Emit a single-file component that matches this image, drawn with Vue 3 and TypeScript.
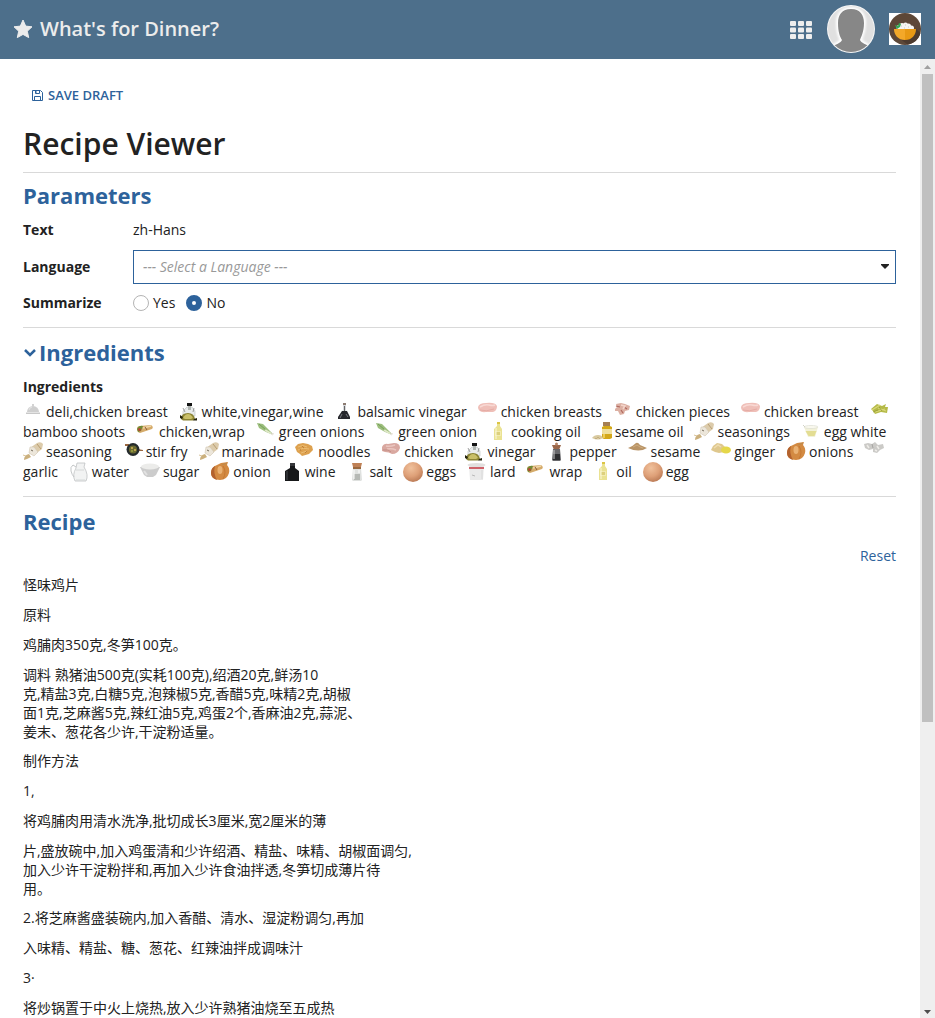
<script setup lang="ts">
import { ref } from 'vue'

interface Ingredient {
  name: string
  icon: string
}

const language = ref('')
const summarize = ref('no')
const open = ref(true)

const ingredients: Ingredient[] = [
  { name: 'deli,chicken breast', icon: 'deli' },
  { name: 'white,vinegar,wine', icon: 'vinegar' },
  { name: 'balsamic vinegar', icon: 'balsamic' },
  { name: 'chicken breasts', icon: 'breast' },
  { name: 'chicken pieces', icon: 'pieces' },
  { name: 'chicken breast', icon: 'breast' },
  { name: 'bamboo shoots', icon: 'bamboo' },
  { name: 'chicken,wrap', icon: 'wrap' },
  { name: 'green onions', icon: 'scallion' },
  { name: 'green onion', icon: 'scallion' },
  { name: 'cooking oil', icon: 'oil' },
  { name: 'sesame oil', icon: 'sesameoil' },
  { name: 'seasonings', icon: 'seasoning' },
  { name: 'egg white', icon: 'eggwhite' },
  { name: 'seasoning', icon: 'seasoning' },
  { name: 'stir fry', icon: 'stirfry' },
  { name: 'marinade', icon: 'seasoning' },
  { name: 'noodles', icon: 'noodles' },
  { name: 'chicken', icon: 'chicken' },
  { name: 'vinegar', icon: 'vinegar' },
  { name: 'pepper', icon: 'pepper' },
  { name: 'sesame', icon: 'sesame' },
  { name: 'ginger', icon: 'ginger' },
  { name: 'onions', icon: 'onion' },
  { name: 'garlic', icon: 'garlic' },
  { name: 'water', icon: 'water' },
  { name: 'sugar', icon: 'sugar' },
  { name: 'onion', icon: 'onion' },
  { name: 'wine', icon: 'wine' },
  { name: 'salt', icon: 'salt' },
  { name: 'eggs', icon: 'egg' },
  { name: 'lard', icon: 'lard' },
  { name: 'wrap', icon: 'wrap' },
  { name: 'oil', icon: 'oil' },
  { name: 'egg', icon: 'egg' },
]

const art: Record<string, string> = {
  deli: '<path d="M4 10a6 6 0 0 1 12 0z" fill="#cfcfcf"/><circle cx="10" cy="3" r="1" fill="#c4c4c4"/><path d="M3 10.500h14v1.500H3z" fill="#c8c8c8"/><path d="M6 8a4 4 0 0 1 3-3" stroke="#e6e6e6" fill="none"/>',
  vinegar: '<path d="M8 5L4 9v5h12V9l-3-4z" fill="#e9ecec" stroke="#b9c0be" stroke-width=".6"/><path d="M8 1h5v3H8z" fill="#151515"/><path d="M9 4h3v4H9z" fill="#b0b5b2"/><path d="M4 6l2 4M15 6l-1 4" stroke="#777" stroke-width=".7"/><path d="M2 17q0-6 7-6 6 0 7 6l-2 1.500H4z" fill="#8b8433"/><path d="M4 16q2-4 5-4t5 4l-2 1H6z" fill="#c9bf68"/><path d="M1 13l3 2-1 2-2-1zM15 17l3-1v2.500h-4z" fill="#25240f"/>',
  balsamic: '<path d="M9 3h3v5l4 7v2H4v-2l5-7z" fill="#d7d9dc"/><path d="M9 1h3v2H9z" fill="#8c7c72"/><path d="M8 9h5l3 6v2H4v-2z" fill="#26272c"/><path d="M10.500 4v5" stroke="#666"/><path d="M8 12l-2 4M12 12l2 3" stroke="#8b8f96" stroke-width=".8"/>',
  breast: '<path d="M0 5q1-4 8-4 9-1 11 3 0 5-4 6H8Q0 11 0 5z" fill="#efbfb8"/><path d="M2 5q5-3 9-2t6 0" stroke="#f8d9d4" stroke-width="1.500" fill="none"/><path d="M2 8q6 2 14-1" stroke="#e2a69f" fill="none" stroke-width=".8"/>',
  pieces: '<path d="M3 2l5-1 4 1 5 2-1 4-4 1-1 3-4 1-2-4-3 0 0-2 2-2z" fill="#dcb0a3"/><path d="M3 4l4 1M11 5l3 2M8 8l2 3" stroke="#b0675c" stroke-width="1.200"/><path d="M8 3l4 1-2 3" stroke="#f3d5cb" stroke-width="1.500" fill="none"/>',
  bamboo: '<path d="M2 7l6-5 5 2 4-2-1 3h3l-1 6-6-1-6 2-2-3z" fill="#b5ba48"/><path d="M3 8l8-5M6 10l10-3M9 6l8 3" stroke="#d9d878" stroke-width="1.200"/><path d="M4 10l5-2M10 5l3 4" stroke="#949a33" stroke-width=".8"/>',
  wrap: '<path d="M1 7q0-3 3-3l11-1q3 2 1 4L4 11q-3-1-3-4z" fill="#d5ab6b"/><path d="M1 7q2-4 6-3l-2 5-3 1z" fill="#6f8b36"/><circle cx="3.500" cy="7.500" r="1.500" fill="#b94531"/><path d="M7 6l8-2" stroke="#f1d7a8" stroke-width="1.500"/><path d="M9 5l2 3" stroke="#8b5934"/>',
  scallion: '<path d="M1 1l6 1 5 5 4 4-1 1-5-2-7-4z" fill="#9cbe7c"/><path d="M3 2l7 6" stroke="#6b9450" stroke-width=".8"/><path d="M9 8l6 3.500" stroke="#dfe8c8" stroke-width="2"/><path d="M15 11l3 1M15 12l2 1" stroke="#cec8b3" stroke-width=".6"/>',
  oil: '<path d="M9 1h3v3l2 3v11H6V7l3-3z" fill="#eae292"/><path d="M9 0h3v2H9z" fill="#dcc544"/><path d="M7 9h6v5H7z" fill="#f2ebb0"/><path d="M8 10h4v3H8z" fill="#ddd07c"/><path d="M8 6v11" stroke="#faf7d9"/>',
  sesameoil: '<path d="M10 5l2-1h6l2 1v11l-2 1h-6l-2-1z" fill="#d3a719"/><path d="M11 0h7v4h-7z" fill="#a57f54"/><path d="M10 7h10v5H10z" fill="#efdf9c"/><path d="M12 12v4" stroke="#edcb53" stroke-width="2"/><path d="M0 16q2-3 6-3 4 0 5 3-5 3-11 0z" fill="#d8c99f"/><path d="M3 16l1 1 2-2 2 2" stroke="#b69c6b" fill="none" stroke-width=".6"/>',
  seasoning: '<path d="M7 6L14 1q4-2 6 1l-1 5-8 6z" fill="#dccbab"/><path d="M7 5l4 0 4 5-4 4-5-3z" fill="#ece6da" stroke="#cbbfa8" stroke-width=".5"/><path d="M14 2l4 5" stroke="#b89d70"/><path d="M8 8l2 1" stroke="#776e5e"/><path d="M1 18q0-5 5-6l2 3-4 2z" fill="#cbb07d"/><path d="M0 13l3 1" stroke="#d9c49b"/>',
  eggwhite: '<path d="M3 5h14l-3 10H7z" fill="#f2f1d8"/><path d="M4.500 9h11l-2 5h-6z" fill="#e3dd93"/><ellipse cx="10" cy="5" rx="7" ry="1.500" fill="#faf9ef" stroke="#dcded2" stroke-width=".7"/><path d="M2 3l2 2" stroke="#d2d3c6"/>',
  stirfry: '<path d="M15 7l5 1v1h-5zM2 2h4v2H2z" fill="#9a6740"/><circle cx="10" cy="7.500" r="6.500" fill="#252b2c"/><circle cx="10" cy="7.500" r="4" fill="#6b6b31"/><circle cx="9" cy="6" r="1" fill="#d6b45a"/><circle cx="12" cy="8" r="1" fill="#d6b45a"/><circle cx="9" cy="9" r="1" fill="#9ca440"/>',
  noodles: '<path d="M0 5l3-3 5-1 5 1 4 2 1 4-4 4-7 2-2-2-3-2z" fill="#dda14f"/><path d="M3 5q5-3 9 0M3 8q5-3 11-1M6 11l6-2" fill="none" stroke="#efc47c" stroke-width=".8"/><path d="M7 4l2 2M12 9l-2 2M5 7l1 2" stroke="#b87831" stroke-width=".8"/>',
  chicken: '<path d="M1 5q2-4 6-3l6-1q6 0 6 5-2 6-8 6-3-2-7-2L1 9z" fill="#d9a8a0"/><path d="M5 4q4 1 9-1M6 7q5-1 9 1" stroke="#eac6bf" fill="none" stroke-width="1.500"/><path d="M2 8l5 0 3 2" stroke="#bd857e" fill="none" stroke-width=".8"/>',
  pepper: '<path d="M6 3h9l-2 5H8z" fill="#9b684b"/><circle cx="10.500" cy="2" r="1.500" fill="#b88465"/><path d="M7 7h7l1 11-1 1H7l-1-1z" fill="#68686b"/><path d="M7 12h7v6H7z" fill="#2d2e30"/><path d="M8 8v9" stroke="#c9c9ca"/>',
  sesame: '<path d="M0 6q4-1 8-5 2-1 4 2l7 3q-8 5-19 0z" fill="#b99467"/><path d="M5 5l4-2 3 2 3 1" stroke="#d0ae80" fill="none"/>',
  ginger: '<path d="M0 8l2-4 4-3 5 1 4 4-2 4-5 1-4-1z" fill="#dfc88e"/><ellipse cx="15" cy="8" rx="5" ry="3.500" fill="#e5d74a"/><path d="M3 6l4-3 3 2" stroke="#eedcb0" fill="none" stroke-width="1.500"/>',
  onion: '<path d="M1 11q0-6 6-8l4-2 7-1-1 3q3 3 2 8-2 7-9 7-9 0-9-7z" fill="#d38a42"/><path d="M1 11q0-5 4-7-2 7 2 14-6-2-6-7z" fill="#b3622e"/><path d="M13 4q4 6 0 13" fill="none" stroke="#c1742f" stroke-width=".8"/><path d="M12 3l5-2" stroke="#b98a50"/><ellipse cx="10" cy="8" rx="2.500" ry="4" fill="#eab274"/>',
  garlic: '<path d="M0 2l4-1 4 1 3-2 3 3 5-1 1 4-4 2-3 3-4-1 0-3-4 1-4-2z" fill="#cbcac7"/><path d="M3 3l2 3M13 4l2 3M11 8l2 1" stroke="#eeece8" stroke-width="1.500"/><path d="M8 2l1 4" stroke="#a5a4a1"/>',
  water: '<path d="M8 1h8l-1 4q5 8 2 14H6Q3 13 7 6z" fill="#f2f3f3" stroke="#bfc2c3" stroke-width=".8"/><path d="M7 5L4 3Q1 5 2 9t3 6" fill="none" stroke="#c3c6c7"/><path d="M7 8h8M7 18h9" stroke="#d5d8d8"/>',
  sugar: '<path d="M0 5h20l-4 8-3 2H7l-3-2z" fill="#cccccc"/><ellipse cx="10" cy="4.500" rx="9" ry="3" fill="#ececea"/><path d="M4 9l3 4" stroke="#e2e2e2" stroke-width="2"/>',
  wine: '<path d="M8 1h5v5l4 3v10H3V9l5-3z" fill="#17181a"/><path d="M8 1h5v3H8z" fill="#36373a"/><path d="M5 9v9" stroke="#44464c"/>',
  salt: '<path d="M7 6h8l1 12-1 1H7l-1-1z" fill="#dfe1df"/><path d="M6 1h10l-1 4H7z" fill="#bf8156"/><path d="M7 5h8v2H7z" fill="#99683f"/><path d="M8 12h6v6H8z" fill="#b6b9b5"/><path d="M8 8v9M13 8v3" stroke="#fff"/>',
  egg: '<defs><radialGradient id="shell" cx=".4" cy=".3" r=".7"><stop offset="0" stop-color="#f0c19c"/><stop offset=".6" stop-color="#dea078"/><stop offset="1" stop-color="#bd7d58"/></radialGradient></defs><circle cx="10" cy="10" r="10" fill="url(#shell)"/>',
  lard: '<path d="M2 4h15l-1 14H3z" fill="#eaeaea"/><ellipse cx="9.500" cy="3" rx="9" ry="2" fill="#e2e0df"/><path d="M2 5h15v2H2z" fill="#cf636a"/><path d="M5 13l3 1" stroke="#b8b8b8"/><path d="M15 8v9" stroke="#d8d8d8"/>',
}

const recipe: string[][] = [
  ['怪味鸡片'],
  ['原料'],
  ['鸡脯肉350克,冬笋100克。'],
  [
    '调料 熟猪油500克(实耗100克),绍酒20克,鲜汤10',
    '克,精盐3克,白糖5克,泡辣椒5克,香醋5克,味精2克,胡椒',
    '面1克,芝麻酱5克,辣红油5克,鸡蛋2个,香麻油2克,蒜泥、',
    '姜末、葱花各少许,干淀粉适量。',
  ],
  ['制作方法'],
  ['1,'],
  ['将鸡脯肉用清水洗净,批切成长3厘米,宽2厘米的薄'],
  [
    '片,盛放碗中,加入鸡蛋清和少许绍酒、精盐、味精、胡椒面调匀,',
    '加入少许干淀粉拌和,再加入少许食油拌透,冬笋切成薄片待',
    '用。',
  ],
  ['2.将芝麻酱盛装碗内,加入香醋、清水、湿淀粉调匀,再加'],
  ['入味精、精盐、糖、葱花、红辣油拌成调味汁'],
  ['3·'],
  ['将炒锅置于中火上烧热,放入少许熟猪油烧至五成热'],
]
</script>

<template>
  <div class="app">
    <header class="topbar">
      <svg class="star" viewBox="0 0 20 20" aria-hidden="true">
        <path d="M10 1l2.700 6.100 6.300.7-4.700 4.400 1.400 6.400L10 15.400l-5.700 3.200 1.400-6.400L1 7.800l6.300-.7z" fill="#ececec" stroke="#ececec" stroke-linejoin="round" />
      </svg>
      <span class="brand">What's for Dinner?</span>
      <button class="iconbtn apps" type="button" aria-label="Apps">
        <svg width="22" height="18" viewBox="0 0 22 18">
          <g fill="#eeeeee">
            <template v-for="r in 3" :key="r">
              <rect v-for="c in 3" :key="c" :x="(c - 1) * 8" :y="(r - 1) * 6.5" width="6" height="5" rx="1" />
            </template>
          </g>
        </svg>
      </button>
      <button class="iconbtn avatar" type="button" aria-label="Profile">
        <svg width="48" height="48" viewBox="0 0 48 48">
          <defs>
            <clipPath id="face"><circle cx="24" cy="24" r="23" /></clipPath>
            <filter id="glow" x="-20%" y="-20%" width="140%" height="140%"><feGaussianBlur stdDeviation="1" /></filter>
          </defs>
          <circle cx="24" cy="24" r="24" fill="#f7f7f7" />
          <g clip-path="url(#face)">
            <rect width="48" height="48" fill="#e0e0e0" />
            <path d="M24 4c9 0 13 6 13 14 0 9-3 14-4 17 1 3 6 4 12 8v8H3v-8c6-4 11-5 12-8-2-3-4-8-4-17C11 10 15 4 24 4z" fill="none" stroke="#fff" stroke-width="4" filter="url(#glow)" />
            <path d="M24 4c9 0 13 6 13 14 0 9-3 14-4 17 1 3 6 4 12 8v8H3v-8c6-4 11-5 12-8-2-3-4-8-4-17C11 10 15 4 24 4z" fill="#878787" />
          </g>
        </svg>
      </button>
      <button class="iconbtn" type="button" aria-label="Home">
        <svg width="32" height="32" viewBox="0 0 32 32">
          <rect width="32" height="32" fill="#fff" />
          <circle cx="16" cy="16" r="16" fill="#5d4737" />
          <path d="M10 25L27 16l4.500 4a16 16 0 0 1-13 11.500z" fill="#4c3a2e" />
          <g fill="#f5f5f2">
            <circle cx="10" cy="14.500" r="2.500" />
            <circle cx="13" cy="12.500" r="2.500" />
            <circle cx="16.500" cy="12" r="2.500" />
            <circle cx="19.500" cy="13" r="2.500" />
            <circle cx="22.500" cy="15" r="2.500" />
            <path d="M8 13.500h14V17H8z" />
          </g>
          <path d="M6 12l3 1 1-3 2 1-1 3-3 2z" fill="#31a853" />
          <path d="M12 13h1M16 12h1M19 14h1M15 15h1" stroke="#c9cac5" />
          <path d="M5 16h11v11C9 27 5 22 5 16z" fill="#f3a829" />
          <path d="M16 16h11c0 6-4 11-11 11z" fill="#e89914" />
        </svg>
      </button>
    </header>

    <div class="body">
      <main class="content">
        <button class="save" type="button">
          <svg width="11" height="11" viewBox="0 0 11 11" fill="none" stroke="#2d629b">
            <path d="M.5.500h8l2 2v8H.500z" />
            <path d="M3.500.500v3h4v-3M2.500 10.500v-4h6v4" />
            <path d="M4 1v2" />
          </svg>
          <span>SAVE DRAFT</span>
        </button>
        <h1>Recipe Viewer</h1>

        <section class="parameters">
          <h2>Parameters</h2>
          <div class="row">
            <span class="label">Text</span>
            <span>zh-Hans</span>
          </div>
          <div class="row tall">
            <label class="label" for="language">Language</label>
            <div class="selectbox">
              <select id="language" v-model="language" :class="{ empty: !language }">
                <option value="">--- Select a Language ---</option>
                <option value="en">English</option>
                <option value="zh-Hans">Chinese</option>
              </select>
              <svg class="caret" width="8" height="5" viewBox="0 0 8 5" aria-hidden="true"><path d="M0 0h8v1L4 5 0 1z" fill="#222" /></svg>
            </div>
          </div>
          <div class="row" role="radiogroup" aria-labelledby="sum">
            <span id="sum" class="label">Summarize</span>
            <label class="radio"><input v-model="summarize" type="radio" name="summarize" value="yes" />Yes</label>
            <label class="radio"><input v-model="summarize" type="radio" name="summarize" value="no" />No</label>
          </div>
        </section>

        <section>
          <h2>
            <button class="toggle" type="button" :aria-expanded="open" @click="open = !open">
              <svg width="12" height="12" viewBox="0 0 12 12" fill="none" stroke="#2d629b" stroke-width="2.500"><path d="M1 4l5 5 5-5" /></svg>
              <span>Ingredients</span>
            </button>
          </h2>
          <div v-if="open">
            <h3>Ingredients</h3>
            <p class="ingredients">
              <template v-for="(item, i) in ingredients" :key="i">
                <svg class="pic" viewBox="0 0 20 20" aria-hidden="true" v-html="art[item.icon]"></svg>{{ item.name + '\u00a0\u00a0 ' }}
              </template>
            </p>
          </div>
        </section>

        <section>
          <h2>Recipe</h2>
          <div class="actions"><a href="#">Reset</a></div>
          <article class="recipe" lang="zh-Hans">
            <p v-for="(lines, i) in recipe" :key="i" :class="{ multi: lines.length > 1 }">
              <template v-for="(line, j) in lines" :key="j"><br v-if="j > 0" />{{ line }}</template>
            </p>
          </article>
        </section>
      </main>

      <div class="scrollbar" aria-hidden="true">
        <svg width="15" height="15" viewBox="0 0 15 15"><path d="M4 10l3.500-4L11 10z" fill="#a0a0a0" /></svg>
        <div class="track"><div class="thumb"></div></div>
        <svg width="15" height="15" viewBox="0 0 15 15"><path d="M4 7l3.500 4L11 7z" fill="#4d4d4d" /></svg>
      </div>
    </div>
  </div>
</template>

<style>
body {
  margin: 0;
}
</style>

<style scoped>
.app {
  display: flex;
  flex-direction: column;
  height: 100vh;
  overflow: hidden;
  background: #fff;
  color: #222;
  font-family: "Open Sans", "Noto Sans CJK SC", sans-serif;
  font-size: 14px;
  line-height: 20px;
}
button {
  border: 0;
  padding: 0;
  background: none;
  font: inherit;
  color: inherit;
  cursor: pointer;
}
svg {
  flex: none;
}
.topbar {
  display: flex;
  flex: none;
  align-items: center;
  height: 59px;
  box-sizing: border-box;
  padding: 0 14px 2px 13px;
  background: #4d6f8b;
  color: #ececec;
}
.star {
  width: 20px;
  height: 20px;
}
.brand {
  margin: 0 auto 0 7px;
  font-size: 20px;
  font-weight: 600;
  line-height: 28px;
}
.iconbtn {
  display: flex;
}
.apps {
  padding-top: 2px;
}
.avatar {
  margin: 0 14px 0 15px;
}
.body {
  display: flex;
  flex: 1;
  min-height: 0;
}
.content {
  flex: 1;
  min-width: 0;
  overflow-y: auto;
  scrollbar-width: none;
  padding: 26px 24px 0 23px;
}
.save {
  display: flex;
  align-items: center;
  gap: 5px;
  margin-left: 9px;
  color: #2d629b;
  font-size: 13px;
  font-weight: 600;
  line-height: 20px;
}
h1 {
  margin: 18px 0 8px;
  font-size: 30px;
  font-weight: 600;
  line-height: 41px;
}
section {
  border-top: 1px solid #d9d9d9;
  padding-bottom: 14px;
}
h2 {
  margin: 9px 0 10px;
  color: #2d629b;
  font-size: 22px;
  font-weight: 700;
  line-height: 30px;
}
.parameters h2 {
  margin-top: 7px;
}
h3 {
  margin: 0 0 5px;
  font-size: 14px;
  font-weight: 700;
  line-height: 20px;
}
.row {
  display: flex;
  align-items: center;
  min-height: 20px;
}
.row.tall {
  margin: 10px 0 9px;
}
.label {
  flex: none;
  width: 110px;
  font-weight: 700;
}
.selectbox {
  position: relative;
  flex: 1;
}
select {
  display: block;
  width: 100%;
  height: 34px;
  box-sizing: border-box;
  appearance: none;
  border: 1px solid #2d629b;
  border-radius: 0;
  padding: 0 24px 0 9px;
  background: #fff;
  color: #222;
  font: inherit;
}
select.empty {
  color: #999;
  font-style: italic;
}
.caret {
  position: absolute;
  right: 7px;
  top: 14px;
  pointer-events: none;
}
.radio {
  display: flex;
  align-items: center;
  gap: 4px;
  margin-right: 11px;
}
.radio input {
  appearance: none;
  width: 16px;
  height: 16px;
  box-sizing: border-box;
  margin: 0;
  border: 1px solid #b4b4b4;
  border-radius: 50%;
  background: #fff;
}
.radio input:checked {
  border: 6px solid #2d629b;
}
.toggle {
  display: flex;
  align-items: center;
  gap: 3px;
  padding-left: 1px;
}
.ingredients {
  margin: 0;
}
.pic {
  width: 20px;
  height: 20px;
  margin-right: 3px;
  vertical-align: top;
}
.actions {
  text-align: right;
}
a {
  color: #2d629b;
  text-decoration: none;
}
.recipe p {
  margin: 9px 0 10px;
}
.recipe p + p {
  margin-top: 10px;
}
.recipe .multi {
  line-height: 19px;
}
.scrollbar {
  display: flex;
  flex: none;
  flex-direction: column;
  width: 15px;
  background: #efefef;
}
.track {
  flex: 1;
}
.thumb {
  height: 69.75%;
  margin: 0 2px;
  background: #c0c0c0;
}
</style>
